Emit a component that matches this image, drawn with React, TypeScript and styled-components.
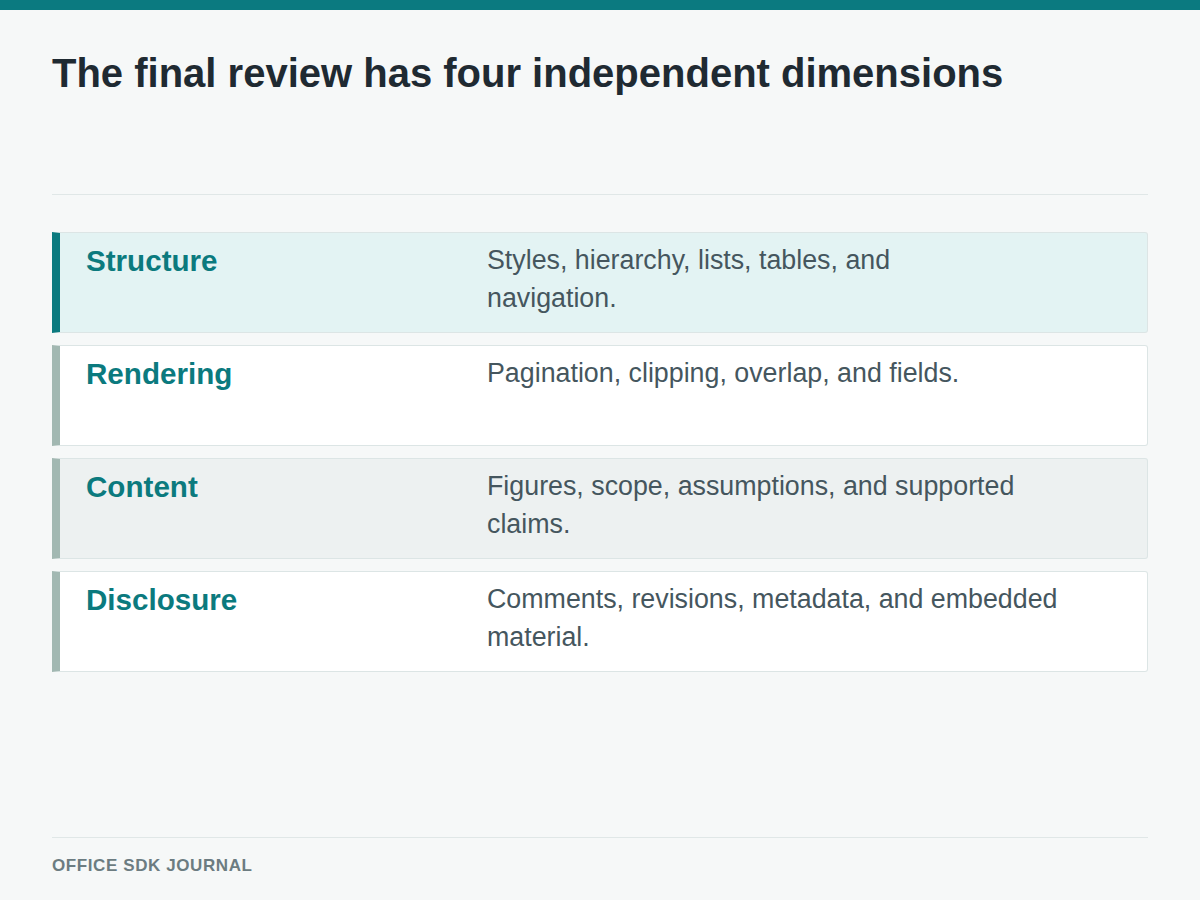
import React from "react";
import styled, { createGlobalStyle } from "styled-components";

const GlobalStyle = createGlobalStyle`
  html, body { margin: 0; padding: 0; }
  body {
    background: #f6f8f8;
    font-family: "Liberation Sans", Arial, sans-serif;
  }
`;

const Page = styled.div`
  width: 1200px;
  height: 900px;
  display: flex;
  flex-direction: column;
  background: #f6f8f8;
  box-sizing: border-box;
`;

const TopBar = styled.div`
  height: 10px;
  background: #0b7a80;
  flex-shrink: 0;
`;

const Content = styled.main`
  padding: 0 52px;
  display: flex;
  flex-direction: column;
  flex: 1;
`;

const Title = styled.h1`
  margin: 39px 0 0;
  font-size: 40px;
  line-height: 48px;
  font-weight: 700;
  color: #1f2a32;
`;

const Divider = styled.hr`
  margin: 97px 0 0;
  border: 0;
  height: 1px;
  background: #e0e7e7;
`;

const List = styled.div`
  margin-top: 37px;
  display: flex;
  flex-direction: column;
  gap: 12px;
`;

const Row = styled.div<{ $tone: "active" | "plain" | "muted" }>`
  box-sizing: border-box;
  min-height: 101px;
  display: grid;
  grid-template-columns: 401px 1fr;
  padding: 9px 26px 7px 26px;
  border: 1px solid #dce5e5;
  border-left: 8px solid ${(p) => (p.$tone === "active" ? "#0b7a7f" : "#a2b8b2")};
  border-radius: 0 3px 3px 0;
  background: ${(p) =>
    p.$tone === "active" ? "#e3f3f3" : p.$tone === "muted" ? "#edf1f1" : "#ffffff"};
`;

const Label = styled.div`
  font-size: 29.6px;
  line-height: 38px;
  font-weight: 700;
  color: #0b7a7e;
`;

const Desc = styled.div`
  font-size: 26.8px;
  line-height: 37.5px;
  color: #45565e;
`;

const Footer = styled.footer`
  margin: auto 52px 0;
  border-top: 1px solid #e0e7e7;
  padding: 18px 0 24px;
  font-size: 17px;
  line-height: 20px;
  font-weight: 700;
  letter-spacing: 0.035em;
  text-transform: uppercase;
  color: #6c7c81;
`;

type Item = { label: string; lines: string[]; tone: "active" | "plain" | "muted" };

const items: Item[] = [
  { label: "Structure", lines: ["Styles, hierarchy, lists, tables, and", "navigation."], tone: "active" },
  { label: "Rendering", lines: ["Pagination, clipping, overlap, and fields."], tone: "plain" },
  { label: "Content", lines: ["Figures, scope, assumptions, and supported", "claims."], tone: "muted" },
  { label: "Disclosure", lines: ["Comments, revisions, metadata, and embedded", "material."], tone: "plain" },
];

export default function App() {
  return (
    <>
      <GlobalStyle />
      <Page>
        <TopBar />
        <Content>
          <Title>The final review has four independent dimensions</Title>
          <Divider />
          <List>
            {items.map((it) => (
              <Row key={it.label} $tone={it.tone}>
                <Label>{it.label}</Label>
                <Desc>
                  {it.lines.map((l, i) => (
                    <React.Fragment key={i}>
                      {i > 0 && <br />}
                      {l}
                    </React.Fragment>
                  ))}
                </Desc>
              </Row>
            ))}
          </List>
        </Content>
        <Footer>Office SDK Journal</Footer>
      </Page>
    </>
  );
}
